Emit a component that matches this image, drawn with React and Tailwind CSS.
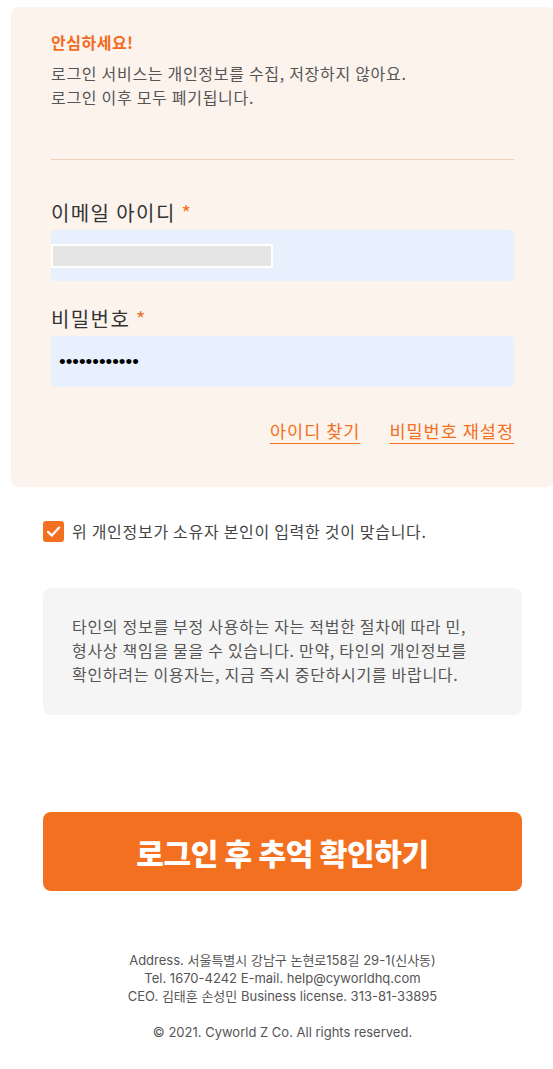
import React from 'react';

const CheckIcon = () => (
  <svg width="21" height="21" viewBox="0 0 21 21" className="shrink-0">
    <rect x="0" y="0" width="21" height="21" rx="3" fill="#f37021" />
    <path d="M5 10.8 L8.8 14.6 L16.2 6.6" fill="none" stroke="#ffffff" strokeWidth="2.2" strokeLinecap="round" strokeLinejoin="round" />
  </svg>
);

export default function App() {
  return (
    <div className="min-h-[1069px] bg-white font-['Noto_Sans_CJK_KR',sans-serif]">
      <div className="ml-[11px] w-[543px] pt-[7px]">
        {/* Notice + login form card */}
        <div className="bg-[#fcf3ed] rounded-lg px-[40px] pt-[24px] pb-[44px]">
          <h3 className="text-[#f26b1f] font-bold text-[16px] tracking-[0.5px] leading-[22px]">안심하세요!</h3>
          <p className="mt-[8px] text-[#555555] text-[16px] tracking-[0.7px] leading-[24px]">
            로그인 서비스는 개인정보를 수집, 저장하지 않아요.
            <br />
            로그인 이후 모두 폐기됩니다.
          </p>

          <div className="mt-[50px] border-t border-[#f3cdb9]" />

          <label className="block mt-[39px] text-[20px] tracking-[1.4px] leading-[28px] text-[#333333]">
            이메일 아이디 <span className="text-[#f37021]">*</span>
          </label>
          <div className="mt-[3px] h-[51px] rounded bg-[#e8f0fe] flex items-center">
            <div className="w-[222px] h-[24px] bg-[#e5e5e5] border-2 border-white" />
          </div>

          <label className="block mt-[24px] text-[20px] tracking-[1.4px] leading-[28px] text-[#333333]">
            비밀번호 <span className="text-[#f37021]">*</span>
          </label>
          <div className="mt-[3px] h-[51px] rounded bg-[#e8f0fe] flex items-center px-[8px]">
            <span className="text-[19px] leading-none text-black font-['Liberation_Sans',sans-serif]">••••••••••••</span>
          </div>

          <div className="mt-[32px] flex justify-end gap-[29px] text-[17.5px] tracking-[1px] leading-[24px] text-[#f37021]">
            <a className="underline underline-offset-[5px] decoration-1">아이디 찾기</a>
            <a className="underline underline-offset-[5px] decoration-1">비밀번호 재설정</a>
          </div>
        </div>

        <div className="px-[32px]">
          {/* Agreement */}
          <div className="mt-[33px] flex items-center gap-[8px]">
            <CheckIcon />
            <span className="text-[16px] tracking-[0.7px] leading-[22px] text-[#444444]">위 개인정보가 소유자 본인이 입력한 것이 맞습니다.</span>
          </div>

          {/* Warning box */}
          <div className="mt-[46px] bg-[#f5f5f5] rounded-lg pl-[29px] pr-[12px] pt-[26px] pb-[29px]">
            <p className="text-[16px] tracking-[0.7px] leading-[24px] text-[#555555]">
              타인의 정보를 부정 사용하는 자는 적법한 절차에 따라 민,
              <br />
              형사상 책임을 물을 수 있습니다. 만약, 타인의 개인정보를
              <br />
              확인하려는 이용자는, 지금 즉시 중단하시기를 바랍니다.
            </p>
          </div>

          {/* Submit */}
          <button className="mt-[97px] w-full h-[79px] rounded-lg bg-[#f37021] text-white font-extrabold text-[30px] tracking-[-0.3px] leading-none">
            로그인 후 추억 확인하기
          </button>

          {/* Footer */}
          <footer className="mt-[60px] text-center text-[13px] leading-[18px] text-[#555555] font-['Inter','Noto_Sans_CJK_KR',sans-serif]">
            <p>Address. 서울특별시 강남구 논현로158길 29-1(신사동)</p>
            <p>Tel. 1670-4242 E-mail. help@cyworldhq.com</p>
            <p>CEO. 김태훈 손성민 Business license. 313-81-33895</p>
            <p className="mt-[18px]">© 2021. Cyworld Z Co. All rights reserved.</p>
          </footer>
        </div>
      </div>
    </div>
  );
}
